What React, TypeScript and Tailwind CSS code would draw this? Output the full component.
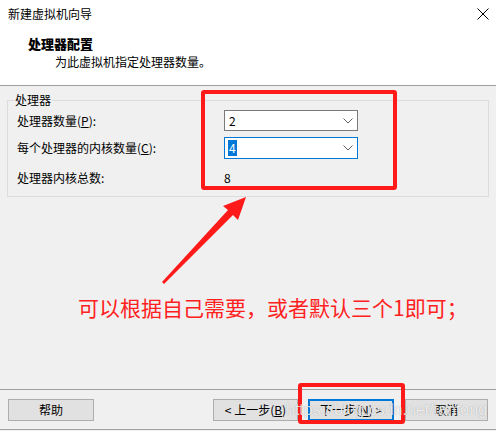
import React from "react";

const Chevron = () => (
  <svg width="10" height="6" viewBox="0 0 10 6" className="text-[#606060]">
    <path d="M0.5 0.5 L5 5 L9.5 0.5" fill="none" stroke="currentColor" strokeWidth="1" />
  </svg>
);

export default function App() {
  return (
    <div
      className="relative w-[496px] h-[431px] overflow-hidden bg-[#f0f0f0] text-[12px] text-black flex flex-col"
      style={{ fontFamily: '"Noto Sans CJK SC", "Noto Sans", sans-serif' }}
    >
      {/* header */}
      <div className="bg-white h-[86px] border-b border-[#a0a0a0] shrink-0">
        <div className="h-[27px] flex items-center justify-between pl-[8px] pr-[6px]">
          <span className="leading-[16px] mt-[1px]">新建虚拟机向导</span>
          <svg width="12" height="12" viewBox="0 0 12 12" className="mr-[1px]">
            <path d="M0.5 0.5 L11.5 11.5 M11.5 0.5 L0.5 11.5" stroke="#000" strokeWidth="1" />
          </svg>
        </div>
        <div className="pl-[28px] pt-[8px] font-black text-[13px] leading-[18px]">处理器配置</div>
        <div className="pl-[55px] leading-[18px]">为此虚拟机指定处理器数量。</div>
      </div>

      {/* group box */}
      <fieldset className="mx-[7px] mt-[6px] border border-[#dcdcdc] pl-[9px] pr-[9px] pt-[2px] pb-[8px]">
        <legend className="-ml-[3px] px-[1px] leading-[16px]">处理器</legend>
        <div className="flex flex-col">
          <div className="flex items-center h-[21px]">
            <span className="w-[207px] leading-[16px]">
              处理器数量(<span className="underline">P</span>):
            </span>
            <div className="w-[134px] h-[21px] bg-white border border-[#7a7a7a] flex items-center justify-between pl-[4px] pr-[4px]">
              <span className="leading-[16px]">2</span>
              <Chevron />
            </div>
          </div>
          <div className="flex items-center h-[22px] mt-[6px]">
            <span className="w-[207px] leading-[16px]">
              每个处理器的内核数量(<span className="underline">C</span>):
            </span>
            <div className="w-[134px] h-[22px] bg-white border border-[#0078d7] flex items-center justify-between pl-[3px] pr-[4px]">
              <span className="leading-[16px] bg-[#0078d7] text-white px-[1px]">4</span>
              <Chevron />
            </div>
          </div>
          <div className="flex items-center h-[20px] mt-[9px]">
            <span className="w-[207px] leading-[16px]">处理器内核总数:</span>
            <span className="leading-[16px]">8</span>
          </div>
        </div>
      </fieldset>

      {/* annotation text */}
      <div className="mt-[96px] pl-[78px] text-[21px] leading-[28px] text-[#ff2020]">
        可以根据自己需要，或者默认三个1即可；
      </div>

      <div className="flex-1" />

      {/* footer */}
      <div className="border-t border-[#a0a0a0] pt-[9px] pb-[8px] px-[8px] flex items-center border-b border-b-[#a0a0a0] mb-[1px]">
        <button className="w-[86px] h-[22px] bg-[#e1e1e1] border border-[#adadad] leading-[16px]">帮助</button>
        <div className="flex-1" />
        <button className="w-[85px] h-[22px] bg-[#e1e1e1] border border-[#adadad] leading-[16px]">
          &lt; 上一步(<span className="underline">B</span>)
        </button>
        <button className="ml-[10px] w-[86px] h-[22px] bg-[#e1e1e1] border-2 border-[#0078d7] leading-[16px]">
          下一步(<span className="underline">N</span>) &gt;
        </button>
        <button className="ml-[11px] w-[83px] h-[22px] bg-[#e1e1e1] border border-[#adadad] leading-[16px]">取消</button>
      </div>

      {/* red annotation boxes */}
      <div className="absolute left-[201px] top-[90px] w-[196px] h-[100px] border-[4px] border-[#ff1a1a] rounded-[3px]" />
      <div className="absolute left-[298px] top-[383px] w-[107px] h-[41px] border-[4px] border-[#ff1a1a] rounded-[3px]" />

      {/* arrow */}
      <svg className="absolute left-0 top-0" width="496" height="431" viewBox="0 0 496 431">
        <polygon
          points="246,197 238,220 233,215 164,284 162,282 228,210 223,206"
          fill="#ff1a1a"
        />
      </svg>

      {/* watermark */}
      <div
        className="absolute left-[286px] top-[399px] text-[16px] leading-[22px] text-white/80"
        style={{ fontFamily: '"Liberation Sans", Arial, sans-serif', textShadow: "0 0 1px rgba(0,0,0,0.35)" }}
      >
        https://blog.csdn.net/tantong
      </div>
    </div>
  );
}
